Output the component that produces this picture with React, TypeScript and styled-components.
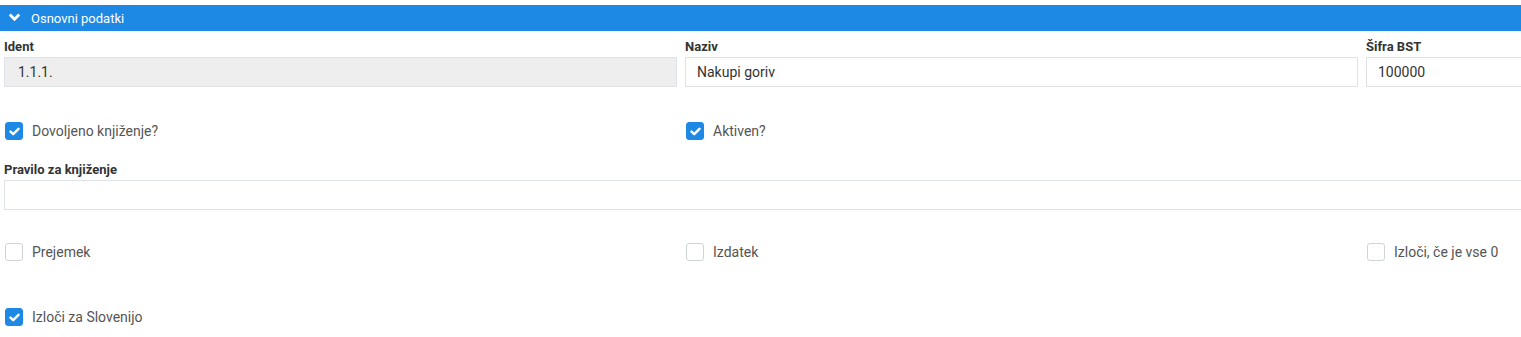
import React from "react";
import styled, { createGlobalStyle } from "styled-components";

const GlobalStyle = createGlobalStyle`
  html, body {
    margin: 0;
    padding: 0;
    overflow: hidden;
    background: #ffffff;
    font-family: Roboto, "Liberation Sans", Arial, sans-serif;
  }
`;

const Page = styled.div`
  padding-top: 5px;
  width: 2060px;
`;

const SectionHeader = styled.div`
  height: 26px;
  background-color: #1e88e5;
  color: #ffffff;
  display: flex;
  align-items: center;
  padding-left: 8px;
  font-size: 13px;
  gap: 10px;
`;

const Body = styled.div`
  padding: 0 4px;
`;

const Grid = styled.div<{ $top: number }>`
  display: grid;
  grid-template-columns: repeat(3, 681px);
  margin-top: ${(p) => p.$top}px;
`;

const Field = styled.div`
  display: flex;
  flex-direction: column;
  padding-right: 8px;
`;

const Label = styled.div`
  font-size: 13px;
  font-weight: 700;
  color: #333333;
  line-height: 16px;
  margin-bottom: 2px;
`;

const Input = styled.div<{ $disabled?: boolean }>`
  box-sizing: border-box;
  height: 30px;
  border: 1px solid #dde3e8;
  background-color: ${(p) => (p.$disabled ? "#eeeeee" : "#ffffff")};
  display: flex;
  align-items: center;
  padding-left: ${(p) => (p.$disabled ? "13px" : "11px")};
  font-size: 14px;
  color: #333333;
`;

const WideField = styled.div<{ $top: number }>`
  margin-top: ${(p) => p.$top}px;
  display: flex;
  flex-direction: column;
`;

const CheckRow = styled.label`
  display: flex;
  align-items: center;
  gap: 9px;
  height: 18px;
  padding-left: 1px;
  font-size: 14px;
  color: #555555;
`;

const Box = styled.span<{ $checked?: boolean }>`
  box-sizing: border-box;
  width: 18px;
  height: 18px;
  border-radius: 3px;
  display: inline-flex;
  align-items: center;
  justify-content: center;
  background-color: ${(p) => (p.$checked ? "#1e88e5" : "#ffffff")};
  border: 1px solid ${(p) => (p.$checked ? "#1e88e5" : "#cfd4d8")};
`;

function Chevron() {
  return (
    <svg width="13" height="10" viewBox="0 0 13 10">
      <path d="M0.8 2.6 L2.8 0.6 L6.5 4.3 L10.2 0.6 L12.2 2.6 L6.5 8.3 Z" fill="#ffffff" />
    </svg>
  );
}

function Check({ checked, label }: { checked?: boolean; label: string }) {
  return (
    <CheckRow>
      <Box $checked={checked}>
        {checked && (
          <svg width="11" height="9" viewBox="0 0 11 9">
            <path d="M1.5 4.6 L4.2 7.2 L9.5 1.8" stroke="#ffffff" strokeWidth="2.4" fill="none" strokeLinecap="round" strokeLinejoin="round" />
          </svg>
        )}
      </Box>
      {label}
    </CheckRow>
  );
}

export default function App() {
  return (
    <Page>
      <GlobalStyle />
      <SectionHeader>
        <Chevron />
        Osnovni podatki
      </SectionHeader>
      <Body>
        <Grid $top={8}>
          <Field>
            <Label>Ident</Label>
            <Input $disabled>1.1.1.</Input>
          </Field>
          <Field>
            <Label>Naziv</Label>
            <Input>Nakupi goriv</Input>
          </Field>
          <Field>
            <Label>Šifra BST</Label>
            <Input>100000</Input>
          </Field>
        </Grid>
        <Grid $top={35}>
          <Check checked label="Dovoljeno knjiženje?" />
          <Check checked label="Aktiven?" />
        </Grid>
        <WideField $top={22}>
          <Label>Pravilo za knjiženje</Label>
          <Input />
        </WideField>
        <Grid $top={33}>
          <Check label="Prejemek" />
          <Check label="Izdatek" />
          <Check label="Izloči, če je vse 0" />
        </Grid>
        <Grid $top={47}>
          <Check checked label="Izloči za Slovenijo" />
        </Grid>
      </Body>
    </Page>
  );
}
